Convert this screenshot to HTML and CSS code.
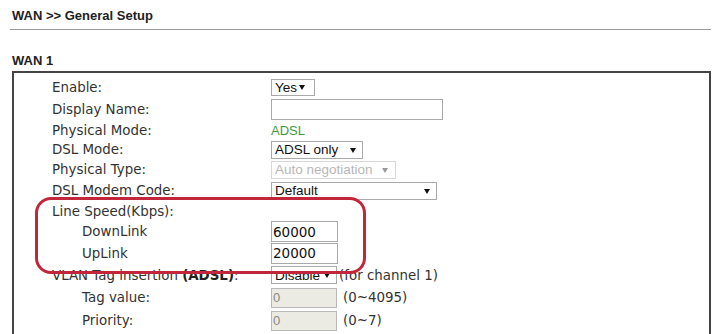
FILE: index.html
```html
<!DOCTYPE html>
<html lang="en">

<head>
    <meta charset="UTF-8">
    <meta name="viewport" content="width=device-width, initial-scale=1.0">
    <title>WAN General Setup</title>
    <link rel="stylesheet" href="styles.css">
</head>

<body>
    <div class="page">
        <h1 class="page-title">WAN &gt;&gt; General Setup</h1>
        <hr class="rule">
        <h2 class="section-title">WAN 1</h2>

        <div class="panel">
            <div class="row h22">
                <span class="label">Enable:</span>
                <span class="select w-yes caret-wide"><select><option>Yes</option></select></span>
            </div>
            <div class="row h22">
                <span class="label">Display Name:</span>
                <input type="text" class="field w-name">
            </div>
            <div class="row h20">
                <span class="label">Physical Mode:</span>
                <span class="status">ADSL</span>
            </div>
            <div class="row h19">
                <span class="label">DSL Mode:</span>
                <span class="select w-mode"><select><option>ADSL only</option></select></span>
            </div>
            <div class="row h21">
                <span class="label">Physical Type:</span>
                <span class="select w-type disabled"><select disabled><option>Auto negotiation</option></select></span>
            </div>
            <div class="row h21">
                <span class="label">DSL Modem Code:</span>
                <span class="select w-code"><select><option>Default</option></select></span>
            </div>
            <div class="row h20">
                <span class="label">Line Speed(Kbps):</span>
            </div>
            <div class="row h21">
                <span class="label sub">DownLink</span>
                <input type="text" class="field w-speed" value="60000">
            </div>
            <div class="row h22">
                <span class="label sub">UpLink</span>
                <input type="text" class="field w-speed" value="20000">
            </div>
            <div class="row h22">
                <span class="label">VLAN Tag insertion <b>(ADSL)</b>:</span>
                <span class="select w-vlan"><select><option>Disable</option></select></span>
                <span class="hint tight">(for channel 1)</span>
            </div>
            <div class="row h23">
                <span class="label sub">Tag value:</span>
                <input type="text" class="field w-tag" value="0" disabled>
                <span class="hint">(0~4095)</span>
            </div>
            <div class="row h23">
                <span class="label sub">Priority:</span>
                <input type="text" class="field w-tag" value="0" disabled>
                <span class="hint">(0~7)</span>
            </div>

            <!-- highlight drawn over the line speed settings -->
            <div class="callout"></div>
        </div>
    </div>
</body>

</html>
```

FILE: styles.css
```css
body {
    margin: 0;
    background: #ffffff;
    font-family: "DejaVu Sans", Verdana, sans-serif;
    color: #333;
}

.page {
    padding: 0 7px 0 10px;
}

.page-title {
    margin: 0;
    padding: 8px 2px 6px;
    font: bold 13px/15px "Liberation Sans", Arial, sans-serif;
    color: #222;
}

.rule {
    margin: 0;
    width: 701px;
    border: none;
    border-top: 1px solid #999;
}

.section-title {
    margin: 23px 0 3px 2px;
    font: bold 13px/15px "Liberation Sans", Arial, sans-serif;
    color: #222;
}

.panel {
    position: relative;
    box-sizing: border-box;
    width: 699px;
    margin-left: 2px;
    padding: 3px 0 12px 38px;
    border: 2px solid #444;
    border-bottom: none;
}

.row {
    display: flex;
    align-items: center;
    font-size: 13.4px;
}

.h19 { height: 19px; }
.h20 { height: 20px; }
.h21 { height: 21px; }
.h22 { height: 22px; }
.h23 { height: 23px; }

.label {
    width: 219px;
    flex-shrink: 0;
    color: #333;
}

.label.sub {
    box-sizing: border-box;
    padding-left: 30px;
}

.label b {
    color: #222;
}

.status {
    font: 13px "Liberation Sans", Arial, sans-serif;
    color: #3f9a3f;
}

.select {
    position: relative;
    display: inline-block;
    height: 18px;
}

.select select {
    -webkit-appearance: none;
    appearance: none;
    box-sizing: border-box;
    width: 100%;
    height: 100%;
    margin: 0;
    padding: 0 0 0 3px;
    border: 1px solid #a9a9a9;
    border-radius: 0;
    background: #fff;
    font: 13.5px "Liberation Sans", Arial, sans-serif;
    color: #111;
}

.select::after {
    content: "";
    position: absolute;
    right: 7px;
    top: 7px;
    border-left: 3px solid transparent;
    border-right: 3px solid transparent;
    border-top: 5px solid #111;
    pointer-events: none;
}

.select.caret-wide::after {
    right: 10px;
    top: 6px;
}

.select.disabled select {
    border-color: #c8c8c8;
    color: #999;
}

.select.disabled::after {
    border-top-color: #999;
    right: 8px;
}

.w-yes { width: 44px; height: 17px; }
.w-mode { width: 92px; }
.w-type { width: 125px; }
.w-code { width: 166px; }
.w-vlan { width: 66px; }

.field {
    box-sizing: border-box;
    margin: 0;
    height: 21px;
    padding: 0 1px;
    border: 1px solid #a9a9a9;
    border-radius: 0;
    background: #fff;
    font: 13.5px "DejaVu Sans", Verdana, sans-serif;
    color: #111;
}

.w-name { width: 172px; }
.w-speed { width: 67px; }

.w-tag {
    width: 66px;
    height: 20px;
    background: #ebebe4;
    border-color: #b8b8b8;
    font: 13px "Liberation Sans", Arial, sans-serif;
    color: #888;
}

.hint {
    margin-left: 6px;
    color: #333;
}

.hint.tight {
    margin-left: 2px;
}

.callout {
    position: absolute;
    left: 21px;
    top: 124px;
    box-sizing: border-box;
    width: 331px;
    height: 77px;
    border: 3px solid #c2263b;
    border-radius: 16px;
    pointer-events: none;
}
```
